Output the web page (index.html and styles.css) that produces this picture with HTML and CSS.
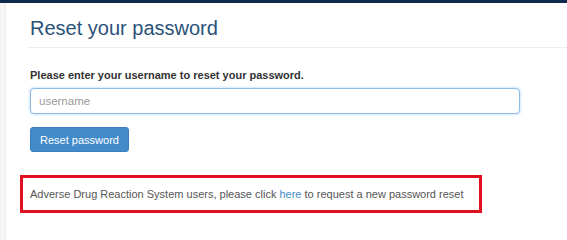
FILE: index.html
```html
<!DOCTYPE html>
<html lang="en">
<head>
<meta charset="utf-8">
<title>Reset your password</title>
<link rel="stylesheet" href="styles.css">
</head>
<body>
<div class="topbar"></div>
<div class="layout">
  <div class="sidebar"></div>
  <main class="content">
    <h1 class="page-title">Reset your password</h1>
    <form class="reset-form">
      <label class="form-label" for="username">Please enter your username to reset your password.</label>
      <input class="form-input" id="username" type="text" placeholder="username">
      <button class="btn-primary" type="button">Reset password</button>
    </form>
    <div class="notice">Adverse Drug Reaction System users, please click <a class="notice-link" href="#">here</a> to request a new password reset</div>
  </main>
</div>
</body>
</html>
```
FILE: styles.css
```css
html, body {
  margin: 0;
  padding: 0;
  background: #fff;
  font-family: "Liberation Sans", Arial, sans-serif;
  color: #333;
}
.topbar {
  height: 3px;
  background: #0e2a4c;
}
.layout {
  display: flex;
  height: 237px;
}
.sidebar {
  width: 5px;
  background: #f6f6f6;
  border-right: 1px solid #ececec;
}
.content {
  flex: 1;
  padding-left: 22px;
}
.page-title {
  margin: 14px 0 0 0;
  padding: 0 0 8px 2px;
  font-size: 20px;
  line-height: 22px;
  font-weight: normal;
  color: #2a5278;
  border-bottom: 1px solid #eeeeee;
}
.reset-form {
  display: flex;
  flex-direction: column;
  align-items: flex-start;
  padding-left: 2px;
  margin-top: 20px;
}
.form-label {
  font-size: 11px;
  font-weight: bold;
  line-height: 14px;
  color: #333;
}
.form-input {
  box-sizing: border-box;
  margin-top: 6px;
  width: 490px;
  height: 26px;
  padding: 0 8px;
  border: 1px solid #8fbde6;
  border-radius: 4px;
  box-shadow: 0 0 3px rgba(102, 175, 233, 0.6);
  font-family: inherit;
  font-size: 11.5px;
  color: #555;
  outline: none;
}
.form-input::placeholder {
  color: #999;
}
.btn-primary {
  margin-top: 13px;
  box-sizing: border-box;
  width: 99px;
  height: 25px;
  padding: 0;
  border: 1px solid #3a7fbf;
  border-radius: 3px;
  background: #428bca;
  color: #fff;
  font-family: inherit;
  font-size: 11px;
}
.notice {
  margin-top: 23px;
  margin-left: -8px;
  width: 462px;
  box-sizing: border-box;
  height: 38px;
  padding: 0 0 0 7px;
  border: 3px solid #e01020;
  font-size: 11px;
  line-height: 32px;
  white-space: nowrap;
  color: #555;
}
.notice-link {
  color: #428bca;
  text-decoration: none;
}
```
